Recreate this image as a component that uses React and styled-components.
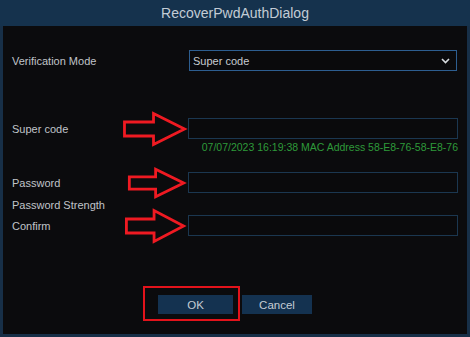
import * as React from "react";
import styled, { createGlobalStyle } from "styled-components";

const Global = createGlobalStyle`
  html, body {
    margin: 0;
    padding: 0;
    background: #0b0b0d;
  }
`;

const Dialog = styled.div`
  width: 470px;
  height: 337px;
  display: flex;
  flex-direction: column;
  background: #0b0b0d;
  font-family: "Liberation Sans", Arial, sans-serif;
  color: #c0c4c9;
`;

const Header = styled.div`
  height: 26px;
  background: #15324d;
  color: #c3ccd5;
  font-size: 14px;
  display: flex;
  align-items: center;
  justify-content: center;
`;

const Body = styled.div`
  flex: 1;
  display: flex;
  flex-direction: column;
  padding: 24px 9px 0 9px;
  border: 3px solid #172f47;
  border-top: none;
`;

const Row = styled.div`
  display: grid;
  grid-template-columns: 108px 68px 270px;
  height: 21px;
  align-items: center;
  margin-top: ${p => p.$top || 0}px;
`;

const Label = styled.div`
  font-size: 11px;
  white-space: nowrap;
`;

const ArrowCell = styled.div`
  height: 21px;
  display: flex;
  align-items: center;
  padding-left: ${p => p.$shift || 0}px;

  svg {
    flex-shrink: 0;
    overflow: visible;
  }
`;

const Input = styled.div`
  height: 21px;
  box-sizing: border-box;
  border: 1px solid #1b3750;
  background: #0a0a0c;
`;

const Select = styled.div`
  height: 21px;
  box-sizing: border-box;
  margin: 0 1px;
  border: 1px solid #2d5e90;
  background: #0a0a0c;
  display: flex;
  align-items: center;
  justify-content: space-between;
  padding: 0 6px 0 3px;
  font-size: 11px;
  color: #c8ccd1;
`;

const Note = styled.div`
  margin-top: 2px;
  height: 12px;
  line-height: 12px;
  text-align: right;
  font-size: 10.5px;
  color: #2e9a3a;
`;

const Footer = styled.div`
  display: flex;
  align-items: flex-start;
  margin: 50px 0 0 131px;
`;

const Highlight = styled.div`
  border: 2px solid #e3131b;
  padding: 7px 5px 5px 13px;
`;

const Button = styled.div`
  width: ${p => p.$w}px;
  height: 19px;
  background: #143250;
  color: #c5ccd4;
  font-size: 11.5px;
  display: flex;
  align-items: center;
  justify-content: center;
  margin-top: ${p => p.$top || 0}px;
  margin-left: ${p => p.$left || 0}px;
`;

const Arrow = ({ w, h }) => (
  <svg width={w} height={h} viewBox="0 0 64 34" preserveAspectRatio="none">
    <path
      d="M1.5 10 H31 V1.5 L62.5 17 L31 32.5 V24 H1.5 Z"
      fill="none"
      stroke="#ef1a22"
      strokeWidth="2.8"
      strokeLinejoin="miter"
      vectorEffect="non-scaling-stroke"
    />
  </svg>
);

const Chevron = () => (
  <svg width="9" height="6" viewBox="0 0 9 6">
    <path d="M1 1 L4.5 4.5 L8 1" fill="none" stroke="#d8dce0" strokeWidth="1.6" />
  </svg>
);

export default function App() {
  return (
    <>
      <Global />
      <Dialog>
        <Header>RecoverPwdAuthDialog</Header>
        <Body>
          <Row>
            <Label>Verification Mode</Label>
            <div />
            <Select>
              <span>Super code</span>
              <Chevron />
            </Select>
          </Row>

          <Row $top={47}>
            <Label>Super code</Label>
            <ArrowCell $shift={3}>
              <Arrow w={63} h={34} />
            </ArrowCell>
            <Input />
          </Row>
          <Note>07/07/2023 16:19:38 MAC Address 58-E8-76-58-E8-76</Note>

          <Row $top={19}>
            <Label>Password</Label>
            <ArrowCell $shift={8}>
              <Arrow w={57} h={30} />
            </ArrowCell>
            <Input />
          </Row>
          <Row $top={1}>
            <Label>Password Strength</Label>
          </Row>
          <Row>
            <Label>Confirm</Label>
            <ArrowCell $shift={5}>
              <Arrow w={60} h={34} />
            </ArrowCell>
            <Input />
          </Row>

          <Footer>
            <Highlight>
              <Button $w={75}>OK</Button>
            </Highlight>
            <Button $w={70} $top={9} $left={2}>
              Cancel
            </Button>
          </Footer>
        </Body>
      </Dialog>
    </>
  );
}
